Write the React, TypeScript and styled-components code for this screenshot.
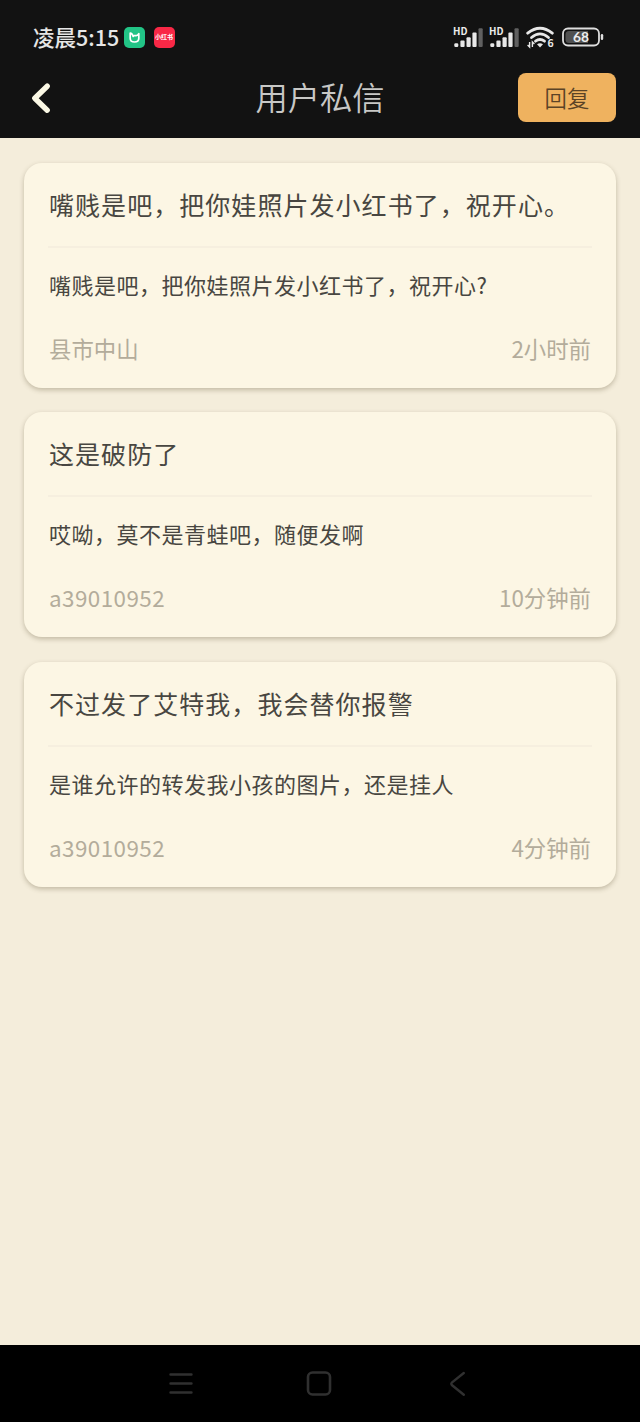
import React from 'react';
import styled, { createGlobalStyle } from 'styled-components';

const GlobalStyle = createGlobalStyle`
  * { box-sizing: border-box; }
  body {
    margin: 0;
    background: #f4eddb;
    font-family: 'Noto Sans CJK SC', sans-serif;
  }
`;

const Screen = styled.div`
  display: flex;
  flex-direction: column;
  width: 640px;
  height: 1422px;
  background: #f4eddb;
`;

const TopArea = styled.div`
  height: 138px;
  flex: none;
  background: #121212;
`;

const StatusBar = styled.div`
  display: flex;
  align-items: center;
  justify-content: space-between;
  height: 60px;
  padding: 14px 36px 0 33px;
`;

const StatusGroup = styled.div`
  display: flex;
  align-items: center;
`;

const Clock = styled.span`
  width: 91px;
  font-size: 21.5px;
  line-height: 30px;
  font-weight: 500;
  color: #e6e6e6;
  white-space: nowrap;
`;

const AppBadge = styled.span<{ $color: string }>`
  display: flex;
  align-items: center;
  justify-content: center;
  width: 21px;
  height: 21px;
  margin-right: 8.5px;
  border-radius: 5px;
  background: ${({ $color }) => $color};
`;

const BadgeText = styled.span`
  font-size: 6px;
  line-height: 8px;
  font-weight: 700;
  color: #fff;
  white-space: nowrap;
`;

const NavBar = styled.header`
  display: grid;
  grid-template-columns: 98px 1fr 98px;
  align-items: center;
  height: 75px;
  padding: 0 24px;
`;

const BackButton = styled.button`
  display: flex;
  padding: 0 0 0 5px;
  border: 0;
  background: none;
`;

const PageTitle = styled.h1`
  margin: 0;
  padding-bottom: 4px;
  text-align: center;
  font-size: 32.3px;
  line-height: 48px;
  font-weight: 350;
  color: #c8c8c6;
`;

const ReplyButton = styled.button`
  height: 49px;
  padding: 0 0 2px;
  border: 0;
  border-radius: 8px;
  background: #efb25f;
  color: #5b4326;
  font: 350 22.4px/46px 'Noto Sans CJK SC', sans-serif;
`;

const MessageList = styled.main`
  display: flex;
  flex: 1;
  flex-direction: column;
  gap: 24.4px;
  padding: 24.8px 24px;
`;

const Card = styled.article`
  display: flex;
  flex-direction: column;
  height: 225px;
  padding: 0 24px;
  border-radius: 18px;
  background: #fcf6e4;
  box-shadow: 0 2px 5px rgba(88, 76, 45, 0.32);
`;

const Subject = styled.h2`
  height: 85px;
  margin: 0;
  padding-left: 1px;
  border-bottom: 2px solid #f6efdf;
  font-size: 25px;
  line-height: 82px;
  letter-spacing: 1.05px;
  font-weight: 400;
  color: #484641;
  white-space: nowrap;
`;

const Body = styled.p`
  height: 75px;
  margin: 0;
  padding-left: 1px;
  font-size: 22px;
  line-height: 73px;
  letter-spacing: 0.5px;
  color: #484641;
  white-space: nowrap;
`;

const Meta = styled.footer`
  display: flex;
  justify-content: space-between;
  padding: 0 1px;
  font-size: 22.4px;
  line-height: 50px;
  color: #b3ac9b;
`;

const Sender = styled.span<{ $spacing: number }>`
  letter-spacing: ${({ $spacing }) => $spacing}px;
`;

const SystemNav = styled.nav`
  display: flex;
  align-items: center;
  justify-content: center;
  gap: 110px;
  flex: none;
  height: 77px;
  padding-right: 2px;
  background: #000;
`;

const messages = [
  { subject: '嘴贱是吧，把你娃照片发小红书了，祝开心。', body: '嘴贱是吧，把你娃照片发小红书了，祝开心?', sender: '县市中山', spacing: 0, time: '2小时前' },
  { subject: '这是破防了', body: '哎呦，莫不是青蛙吧，随便发啊', sender: 'a39010952', spacing: 0.45, time: '10分钟前' },
  { subject: '不过发了艾特我，我会替你报警', body: '是谁允许的转发我小孩的图片，还是挂人', sender: 'a39010952', spacing: 0.45, time: '4分钟前' },
];

const sans = "'Noto Sans CJK SC', sans-serif";

const Signal = () => (
  <svg width="36" height="30" viewBox="0 0 36 30" overflow="visible">
    <text x="0" y="12.5" fontSize="10" fontWeight="700" fontFamily={sans} fill="#ececec" textLength="14.5" lengthAdjust="spacingAndGlyphs">HD</text>
    <g fill="#e8e8e8">
      <rect x="1.3" y="21.3" width="4" height="3.7" rx="1.3" />
      <rect x="7.4" y="18.6" width="4.2" height="6.4" rx="1" />
      <rect x="13.5" y="15.3" width="4.2" height="9.7" rx="1" />
      <rect x="19.4" y="10.5" width="4.2" height="14.5" rx="1" />
      <rect x="25.5" y="6.3" width="4.2" height="18.7" rx="1" fill="#606060" />
    </g>
  </svg>
);

const Wifi = () => (
  <svg width="30" height="24" viewBox="0 0 30 24">
    <g fill="none" stroke="#e8e8e8" strokeWidth="2.8" strokeLinecap="round">
      <path d="M1.7 8.2Q14 -1.8 26.3 8.2" />
      <path d="M5.5 12.5Q14 5.3 22.5 12.5" />
      <path d="M9.5 16.2Q14 12.8 18.5 16.2" />
    </g>
    <path d="M11 19.2Q14 17.4 17 19.2L14 22.4Z" fill="#e8e8e8" />
    <path d="M3.6 17v5l-2-2M6.4 22v-5l2 2" fill="none" stroke="#e8e8e8" strokeWidth="1.4" />
    <text x="21.5" y="22" fontSize="10.5" fontWeight="700" fontFamily={sans} fill="#e8e8e8">6</text>
  </svg>
);

const Battery = () => (
  <svg width="42" height="20" viewBox="0 0 42 20">
    <rect x="1" y="1.5" width="36" height="17" rx="5" fill="none" stroke="#dedede" strokeWidth="1.8" />
    <path d="M7 4H26V16H7Q3.5 16 3.5 12.5V7.5Q3.5 4 7 4Z" fill="#515151" />
    <rect x="38.8" y="7" width="2.4" height="6" rx="1.2" fill="#dedede" />
    <text x="19" y="15" textAnchor="middle" fontSize="13.5" fontWeight="700" fontFamily="Lato, sans-serif" fill="#ededed" textLength="16" lengthAdjust="spacingAndGlyphs">68</text>
  </svg>
);

const WifiSlot = styled.span`
  display: flex;
  width: 37px;
  padding-left: 1px;
`;

export default function App() {
  return (
    <Screen>
      <GlobalStyle />
      <TopArea>
        <StatusBar>
          <StatusGroup>
            <Clock>凌晨5:15</Clock>
            <AppBadge $color="#22c486">
              <svg width="13" height="13" viewBox="0 0 13 13" fill="none" stroke="#fff" strokeWidth="1.7" strokeLinecap="round" strokeLinejoin="round">
                <path d="M6 4.6H8.2Q9.6 4.4 10.8 2.6V7.2Q10.8 11 6.5 11T2.2 7.2V2.2Q4.2 2.2 5.2 5.4" />
              </svg>
            </AppBadge>
            <AppBadge $color="#f92846"><BadgeText>小红书</BadgeText></AppBadge>
          </StatusGroup>
          <StatusGroup>
            <Signal />
            <Signal />
            <WifiSlot><Wifi /></WifiSlot>
            <Battery />
          </StatusGroup>
        </StatusBar>
        <NavBar>
          <BackButton aria-label="返回">
            <svg width="24" height="34" viewBox="0 0 24 34" fill="none" stroke="#fbf8e5" strokeWidth="5.4" strokeLinecap="round" strokeLinejoin="round">
              <path d="M18.2 5.2L5.8 17.2L18.2 29.2" />
            </svg>
          </BackButton>
          <PageTitle>用户私信</PageTitle>
          <ReplyButton>回复</ReplyButton>
        </NavBar>
      </TopArea>
      <MessageList>
        {messages.map((m) => (
          <Card key={m.subject}>
            <Subject>{m.subject}</Subject>
            <Body>{m.body}</Body>
            <Meta>
              <Sender $spacing={m.spacing}>{m.sender}</Sender>
              <time>{m.time}</time>
            </Meta>
          </Card>
        ))}
      </MessageList>
      <SystemNav>
        <svg width="28" height="28" viewBox="0 0 28 28" stroke="#303030" strokeWidth="2.6" strokeLinecap="round">
          <path d="M3.6 4.5H24.4M3.6 13.5H24.4M3.6 22.5H24.4" />
        </svg>
        <svg width="28" height="28" viewBox="0 0 28 28" fill="none" stroke="#303030" strokeWidth="2.6">
          <rect x="3" y="2.5" width="22" height="22" rx="4.5" />
        </svg>
        <svg width="28" height="28" viewBox="0 0 28 28" fill="none" stroke="#303030" strokeWidth="2.4" strokeLinecap="round">
          <path d="M20.8 3L9.1 12.3Q7.5 13.8 9.1 15.3L20.8 24.8" />
        </svg>
      </SystemNav>
    </Screen>
  );
}
